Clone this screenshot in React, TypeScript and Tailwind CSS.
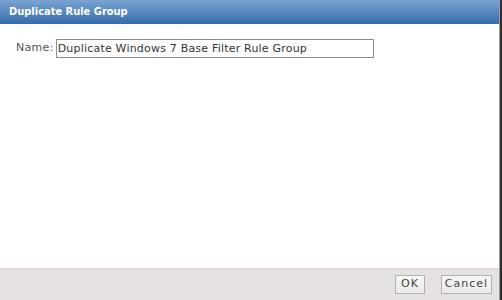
import React, { useState } from 'react';

const App: React.FC = () => {
  const [name, setName] = useState('Duplicate Windows 7 Base Filter Rule Group');

  return (
    <div className="flex h-[300px] w-[502px] bg-[#2e2e2e] font-['DejaVu_Sans',sans-serif]">
      <div className="flex h-full w-[500px] flex-col border-r border-[#9a9a9a] bg-white">
        {/* title bar */}
        <div className="flex h-[24px] items-center bg-gradient-to-b from-[#7ba3d2] to-[#336ca9] pl-[9px] font-['DejaVu_Sans_Condensed',sans-serif] text-[11px] font-bold text-white">
          Duplicate Rule Group
        </div>

        <div className="flex-1 px-[16px] pt-[15px]">
          <label className="flex items-center gap-[2px] text-[11px] tracking-[0.3px] text-[#555]">
            <span>Name:</span>
            <input
              className="h-[19px] w-[318px] border border-[#8c8c8c] px-[1px] text-[11px] tracking-[0.2px] text-[#333] outline-none"
              value={name}
              onChange={(e) => setName(e.target.value)}
            />
          </label>
        </div>

        {/* footer */}
        <div className="flex h-[32px] items-center justify-end gap-[16px] border-t border-[#dcd6d8] bg-[#e6e1e3] pr-[7px]">
          <button className="h-[19px] w-[30px] border border-[#b0b0b0] bg-gradient-to-b from-[#f7f6f6] to-[#eceaea] text-[11px] tracking-[1px] text-[#444]">OK</button>
          <button className="h-[19px] w-[51px] border border-[#b0b0b0] bg-gradient-to-b from-[#f7f6f6] to-[#eceaea] text-[11px] tracking-[1px] text-[#444]">Cancel</button>
        </div>
      </div>
    </div>
  );
};

export default App;
